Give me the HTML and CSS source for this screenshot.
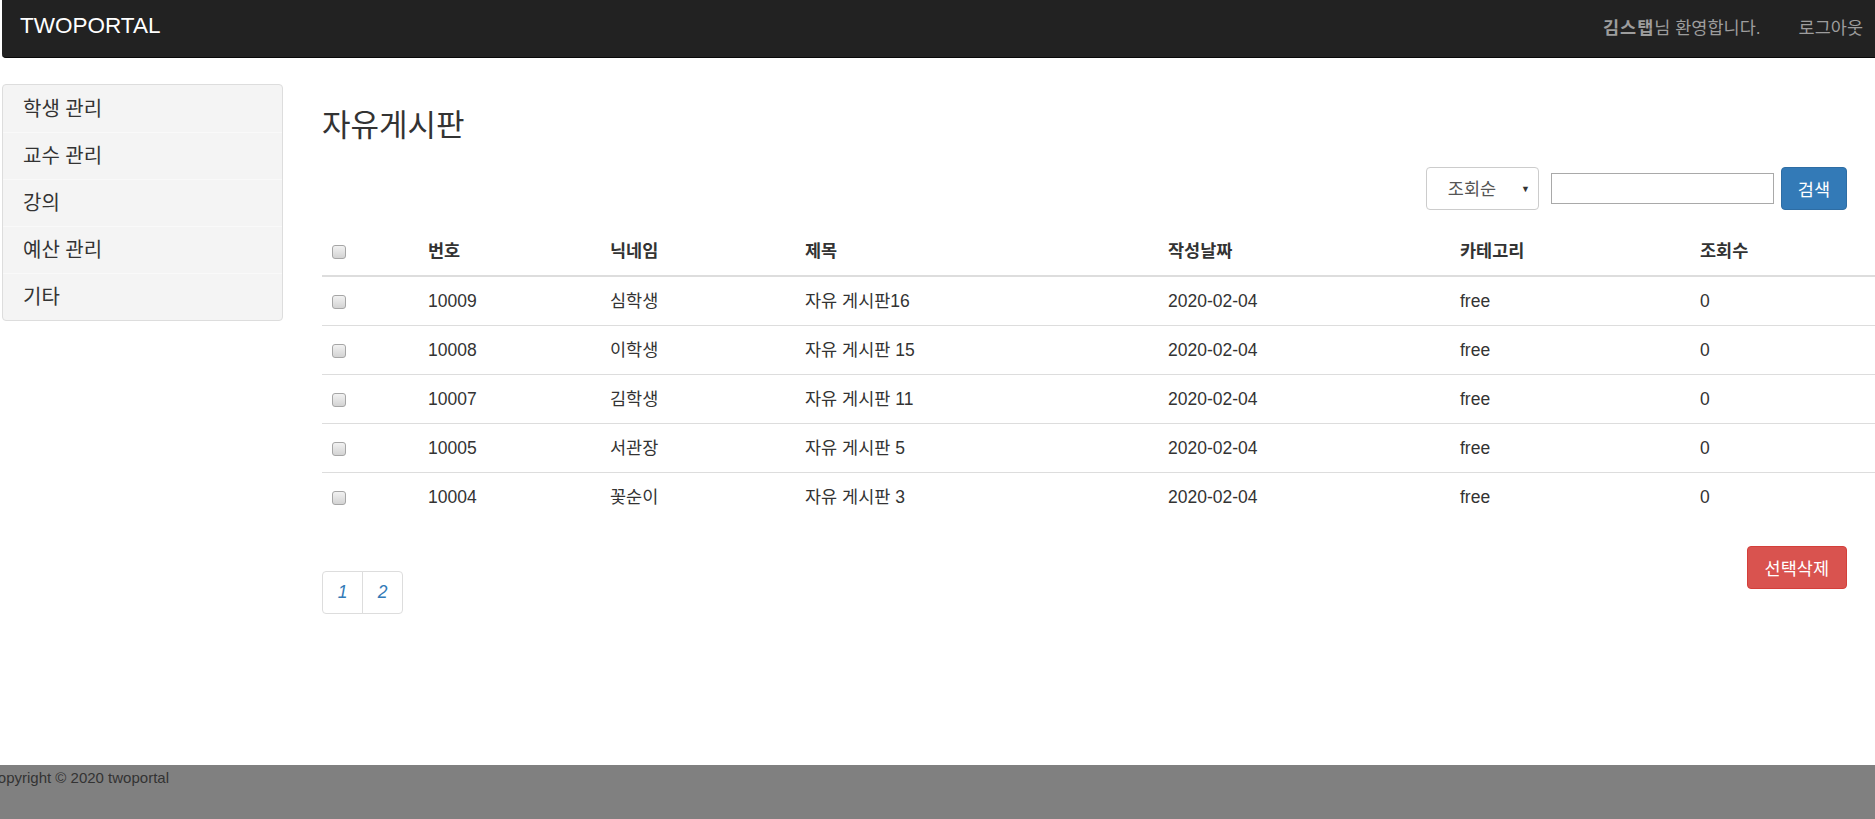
FILE: index.html
```html
<!DOCTYPE html>
<html lang="ko">
<head>
  <meta charset="UTF-8" />
  <meta name="viewport" content="width=device-width, initial-scale=1.0"/>
  <title>자유게시판 - TWOPORTAL</title>
  <link rel="stylesheet" href="styles.css">
</head>
<body>

  <nav class="navbar">
    <a class="brand" href="#">TWOPORTAL</a>
    <div class="nav-right">
      <span class="welcome"><b>김스탭</b>님 환영합니다.</span>
      <a class="logout" href="#">로그아웃</a>
    </div>
  </nav>

  <div class="wrap">
    <ul class="side-menu">
      <li><a href="#">학생 관리</a></li>
      <li><a href="#">교수 관리</a></li>
      <li><a href="#">강의</a></li>
      <li><a href="#">예산 관리</a></li>
      <li><a href="#">기타</a></li>
    </ul>

    <main class="content">
      <h3 class="page-title">자유게시판</h3>

      <form class="search-bar" onsubmit="return false">
        <span class="select-box">
          <select>
            <option>조회순</option>
            <option>최신순</option>
          </select>
        </span>
        <input type="text" class="search-input">
        <button class="btn btn-primary">검색</button>
      </form>

      <table class="board">
        <colgroup>
          <col style="width:96px">
          <col style="width:182px">
          <col style="width:195px">
          <col style="width:363px">
          <col style="width:292px">
          <col style="width:240px">
          <col style="width:192px">
        </colgroup>
        <thead>
          <tr>
            <th><input type="checkbox"></th>
            <th>번호</th>
            <th>닉네임</th>
            <th>제목</th>
            <th>작성날짜</th>
            <th>카테고리</th>
            <th>조회수</th>
          </tr>
        </thead>
        <tbody>
          <tr>
            <td><input type="checkbox"></td>
            <td>10009</td>
            <td>심학생</td>
            <td>자유 게시판16</td>
            <td>2020-02-04</td>
            <td>free</td>
            <td>0</td>
          </tr>
          <tr>
            <td><input type="checkbox"></td>
            <td>10008</td>
            <td>이학생</td>
            <td>자유 게시판 15</td>
            <td>2020-02-04</td>
            <td>free</td>
            <td>0</td>
          </tr>
          <tr>
            <td><input type="checkbox"></td>
            <td>10007</td>
            <td>김학생</td>
            <td>자유 게시판 11</td>
            <td>2020-02-04</td>
            <td>free</td>
            <td>0</td>
          </tr>
          <tr>
            <td><input type="checkbox"></td>
            <td>10005</td>
            <td>서관장</td>
            <td>자유 게시판 5</td>
            <td>2020-02-04</td>
            <td>free</td>
            <td>0</td>
          </tr>
          <tr>
            <td><input type="checkbox"></td>
            <td>10004</td>
            <td>꽃순이</td>
            <td>자유 게시판 3</td>
            <td>2020-02-04</td>
            <td>free</td>
            <td>0</td>
          </tr>
        </tbody>
      </table>

      <div class="board-bottom">
        <ul class="pager">
          <li><a href="#">1</a></li>
          <li><a href="#">2</a></li>
        </ul>
        <button class="btn btn-danger">선택삭제</button>
      </div>
    </main>
  </div>

  <footer class="footer">
    <p>Copyright &copy; 2020 twoportal</p>
  </footer>

</body>
</html>
```

FILE: styles.css
```css
* {
  box-sizing: border-box;
}

html, body {
  height: 100%;
  overflow: hidden;
}

body {
  margin: 0;
  display: flex;
  flex-direction: column;
  font-family: "Liberation Sans", "Noto Sans CJK KR", sans-serif;
  font-size: 17.5px;
  color: #333;
  background: #fff;
}

a {
  text-decoration: none;
}

/* top bar */
.navbar {
  flex: none;
  height: 58px;
  margin-left: 2px;
  padding: 0 12px 5px 18px;
  display: flex;
  align-items: center;
  justify-content: space-between;
  background: #222;
  border-bottom: 1px solid #080808;
  border-bottom-left-radius: 4px;
}

.brand {
  color: #fff;
  font-size: 22.5px;
}

.nav-right {
  display: flex;
  gap: 38px;
  color: #9d9d9d;
}

.welcome b {
  letter-spacing: 1px;
}

.logout {
  color: #9d9d9d;
}

/* body */
.wrap {
  flex: 1;
  display: flex;
  align-items: flex-start;
  padding-top: 26px;
}

.side-menu {
  flex: none;
  width: 281px;
  margin: 0 0 0 2px;
  padding: 0;
  list-style: none;
  background: #f4f4f4;
  border: 1px solid #ddd;
  border-radius: 4px;
}

.side-menu li {
  height: 47px;
  padding: 0 20px 3px;
  display: flex;
  align-items: center;
}

.side-menu li + li {
  border-top: 1px solid #f9f9f9;
}

.side-menu a {
  color: #333;
  font-size: 20px;
}

.content {
  flex: none;
  width: 1525px;
  margin-left: 39px;
}

.page-title {
  margin: 24px 0 0;
  font-size: 31px;
  font-weight: normal;
  line-height: 36px;
}

/* search */
.search-bar {
  margin-top: 23px;
  display: flex;
  justify-content: flex-end;
  align-items: center;
}

.select-box {
  position: relative;
}

.select-box select {
  appearance: none;
  -webkit-appearance: none;
  width: 113px;
  height: 43px;
  padding: 0 0 0 21px;
  font: inherit;
  color: #555;
  background: #fff;
  border: 1px solid #ccc;
  border-radius: 4px;
}

.select-box::after {
  content: "▼";
  position: absolute;
  right: 9px;
  top: 50%;
  transform: translateY(-50%);
  font-size: 9px;
  color: #333;
  pointer-events: none;
}

.search-input {
  width: 223px;
  height: 31px;
  margin-left: 12px;
  padding: 1px 3px;
  font: inherit;
  border: 1px solid #a9a9a9;
}

.btn {
  height: 43px;
  padding: 0 16px;
  font: inherit;
  color: #fff;
  border: 1px solid transparent;
  border-radius: 4px;
  cursor: pointer;
}

.btn-primary {
  margin-left: 7px;
  background: #337ab7;
  border-color: #2e6da4;
}

.btn-danger {
  padding: 0 17px;
  background: #d9534f;
  border-color: #d43f3a;
}

/* board table */
.board {
  width: 1560px;
  margin-top: 18px;
  table-layout: fixed;
  border-collapse: separate;
  border-spacing: 0;
}

.board th {
  padding: 11px 10px;
  line-height: 25px;
  text-align: left;
  font-weight: bold;
  border-bottom: 2px solid #ddd;
}

.board td {
  padding: 12px 10px 11px;
  line-height: 25px;
  border-top: 1px solid #ddd;
}

.board tbody tr:first-child td {
  border-top: 0;
}

.board input[type="checkbox"] {
  appearance: none;
  -webkit-appearance: none;
  width: 14px;
  height: 14px;
  margin: 0;
  vertical-align: middle;
  border: 1px solid #a6a6a6;
  border-radius: 3px;
  background: linear-gradient(#f2f2f2, #d3d3d3);
}

/* paging + delete */
.board-bottom {
  margin-top: 25px;
  display: flex;
  justify-content: space-between;
  align-items: flex-start;
}

.pager {
  margin: 25px 0 0;
  padding: 0;
  list-style: none;
  display: flex;
}

.pager a {
  display: block;
  width: 41px;
  height: 43px;
  line-height: 41px;
  text-align: center;
  font-style: italic;
  color: #337ab7;
  border: 1px solid #ddd;
}

.pager li + li a {
  margin-left: -1px;
}

.pager li:first-child a {
  border-radius: 4px 0 0 4px;
}

.pager li:last-child a {
  border-radius: 0 4px 4px 0;
}

/* footer */
.footer {
  flex: none;
  height: 54px;
  background: #808080;
}

.footer p {
  margin: 0 0 0 -13px;
  padding-top: 4px;
  font-size: 15px;
  line-height: 18px;
  color: #333;
}
```
